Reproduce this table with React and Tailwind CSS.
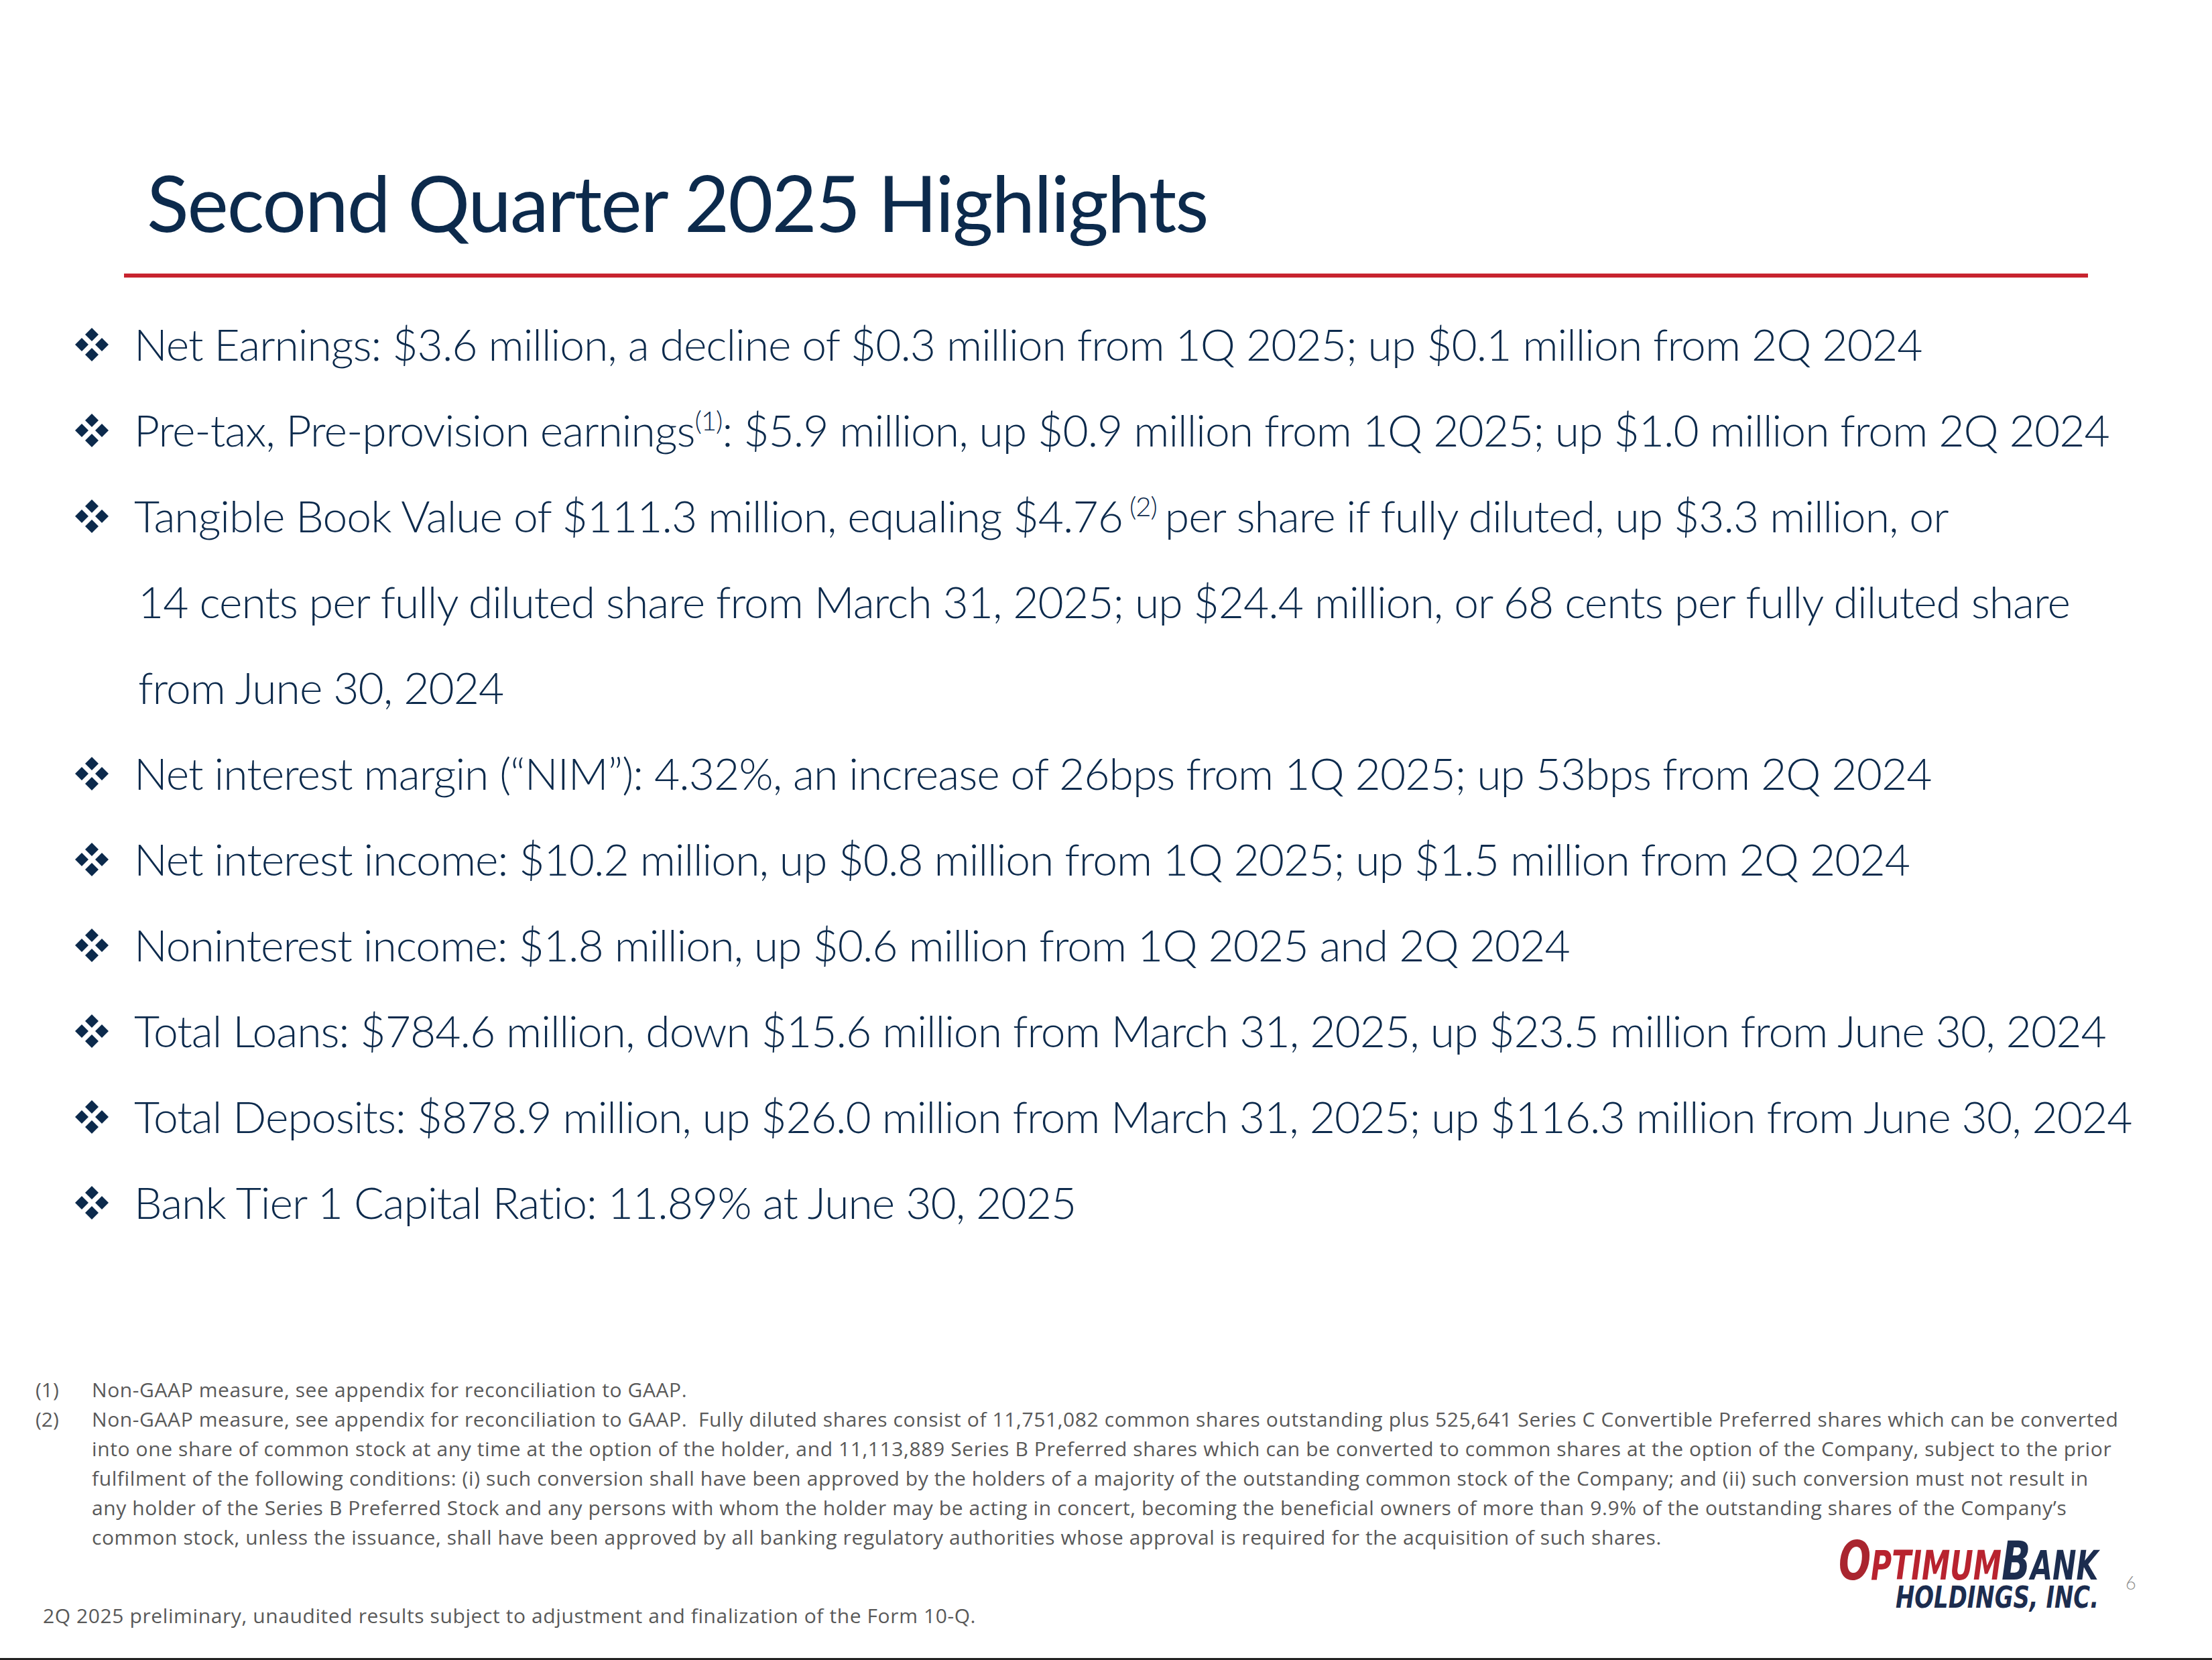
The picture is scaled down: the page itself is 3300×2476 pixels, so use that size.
const NAVY = 'text-[#0c2a4c]';

function Diamond() {
  return (
    <svg width="50" height="50" viewBox="0 0 50 50" className="mt-[40px] shrink-0">
      <g fill="#0c2a4c">
        <polygon points="25,0 35,10 25,20 15,10" />
        <polygon points="10,15 20,25 10,35 0,25" />
        <polygon points="40,15 50,25 40,35 30,25" />
        <polygon points="25,30 35,40 25,50 15,40" />
      </g>
    </svg>
  );
}

function Sup({ children, space }) {
  return (
    <span className={`relative -top-[24px] text-[40px] leading-none ${space ? 'ml-[10px] mr-[12px]' : ''}`}>{children}</span>
  );
}

const BULLETS = [
  ['Net Earnings: $3.6 million, a decline of $0.3 million from 1Q 2025; up $0.1 million from 2Q 2024'],
  [
    <>
      Pre-tax, Pre-provision earnings<Sup>(1)</Sup>: $5.9 million, up $0.9 million from 1Q 2025; up $1.0 million from 2Q 2024
    </>,
  ],
  [
    <>
      Tangible Book Value of $111.3 million, equaling $4.76<Sup space>(2)</Sup>per share if fully diluted, up $3.3 million, or
    </>,
    '14 cents per fully diluted share from March 31, 2025; up $24.4 million, or 68 cents per fully diluted share',
    'from June 30, 2024',
  ],
  ['Net interest margin (“NIM”): 4.32%, an increase of 26bps from 1Q 2025; up 53bps from 2Q 2024'],
  ['Net interest income: $10.2 million, up $0.8 million from 1Q 2025; up $1.5 million from 2Q 2024'],
  ['Noninterest income: $1.8 million, up $0.6 million from 1Q 2025 and 2Q 2024'],
  ['Total Loans: $784.6 million, down $15.6 million from March 31, 2025, up $23.5 million from June 30, 2024'],
  ['Total Deposits: $878.9 million, up $26.0 million from March 31, 2025; up $116.3 million from June 30, 2024'],
  ['Bank Tier 1 Capital Ratio: 11.89% at June 30, 2025'],
];

const NOTE2 = [
  'Non-GAAP measure, see appendix for reconciliation to GAAP.\u00a0 Fully diluted shares consist of 11,751,082 common shares outstanding plus 525,641 Series C Convertible Preferred shares which can be converted',
  'into one share of common stock at any time at the option of the holder, and 11,113,889 Series B Preferred shares which can be converted to common shares at the option of the Company, subject to the prior',
  'fulfilment of the following conditions: (i) such conversion shall have been approved by the holders of a majority of the outstanding common stock of the Company; and (ii) such conversion must not result in',
  'any holder of the Series B Preferred Stock and any persons with whom the holder may be acting in concert, becoming the beneficial owners of more than 9.9% of the outstanding shares of the Company’s',
  'common stock, unless the issuance, shall have been approved by all banking regulatory authorities whose approval is required for the acquisition of such shares.',
];

function Logo() {
  return (
    <div className="flex flex-col items-end font-['DejaVu_Sans',sans-serif] font-bold italic">
      <div className="flex items-baseline h-[70px] origin-right scale-x-[0.708] text-[#a9252f]">
        <span className="text-[80px] leading-[70px]">O</span>
        <span className="text-[60px] leading-[50px] text-[#b8232f]">PTIMUM</span>
        <span className="text-[80px] leading-[70px] text-[#1c2d4f]">B</span>
        <span className="text-[60px] leading-[50px] text-[#1c2d4f]">ANK</span>
      </div>
      <div className="origin-right scale-x-[0.769] text-[44px] leading-[37px] text-[#1c2d4f]">HOLDINGS, INC.</div>
    </div>
  );
}

export default function App() {
  return (
    <div className="relative w-[3300px] h-[2476px] bg-white border-b-[3px] border-[#222] font-['Lato',sans-serif] overflow-hidden">
      <h1 className={`pt-[242px] pl-[219px] text-[116px] leading-[120px] tracking-[-2px] font-normal ${NAVY}`}>
        Second Quarter 2025 Highlights
      </h1>
      <div className="mt-[46px] ml-[185px] w-[2930px] h-[6px] bg-[#c8242f]" />

      <ul className={`mt-[35px] ${NAVY} text-[66px] leading-[128px] tracking-[-1px] font-light`}>
        {BULLETS.map((lines, i) => (
          <li key={i} className="flex">
            <div className="w-[200px] shrink-0 flex justify-end pr-[38px]">
              <Diamond />
            </div>
            <div className="whitespace-nowrap">
              {lines.map((l, j) => (
                <div key={j} className={j > 0 ? 'pl-[6px]' : ''}>
                  {l}
                </div>
              ))}
            </div>
          </li>
        ))}
      </ul>

      {/* footnotes */}
      <div className="absolute left-0 top-[2051px] font-['Open_Sans',sans-serif] text-[30px] leading-[44px] tracking-[0.6px] text-[#595959] whitespace-nowrap">
        <div className="flex">
          <span className="w-[137px] pl-[53px] shrink-0 tracking-normal">(1)</span>
          <span>Non-GAAP measure, see appendix for reconciliation to GAAP.</span>
        </div>
        <div className="flex">
          <span className="w-[137px] pl-[53px] shrink-0 tracking-normal">(2)</span>
          <div>
            {NOTE2.map((l, j) => (
              <div key={j}>{l}</div>
            ))}
          </div>
        </div>
        <div className="mt-[73px] pl-[64px]">
          2Q 2025 preliminary, unaudited results subject to adjustment and finalization of the Form 10-Q.
        </div>
      </div>

      <div className="absolute right-[169px] top-[2294px]">
        <Logo />
      </div>
      <span className="absolute left-[3171px] top-[2347px] text-[27px] leading-[27px] text-[#8c8c8c] font-light">6</span>
    </div>
  );
}
